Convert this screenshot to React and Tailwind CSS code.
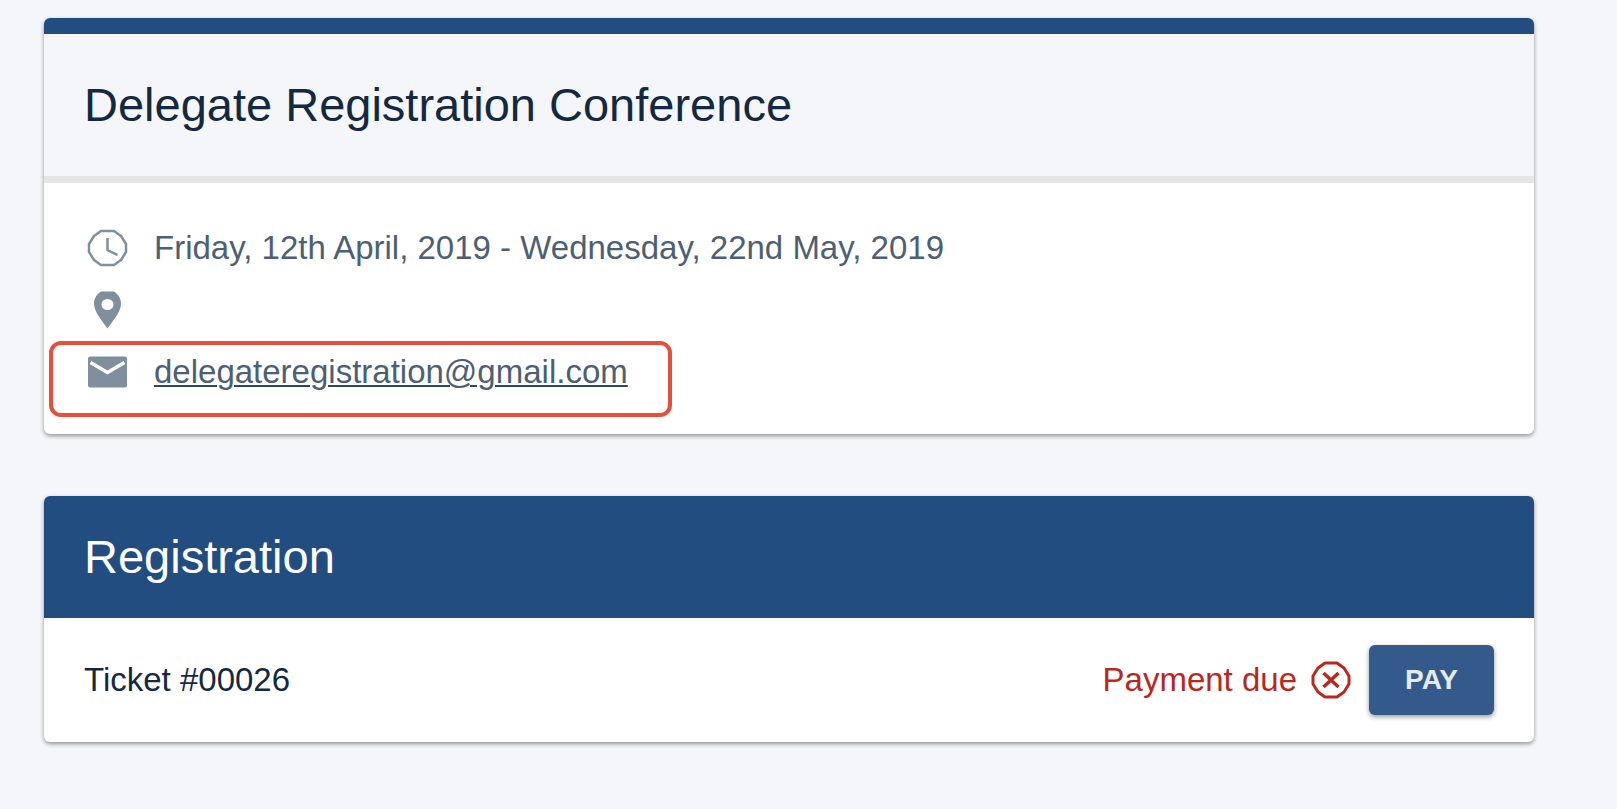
import React from "react";

const ClockIcon = () => (
  <svg width="48" height="48" viewBox="0 0 48 48" fill="none" stroke="#808f9d" aria-hidden="true">
    <path d="M17 7h13l7 5 5 8v8l-5 8-7 5H17l-7-5-5-8v-8l5-8z" strokeWidth="2.5" strokeLinejoin="round" />
    <path d="M23.500 14v12l10 5" strokeWidth="2.5" />
  </svg>
);

const PinIcon = () => (
  <svg width="48" height="48" viewBox="0 0 48 48" fill="#808f9d" aria-hidden="true">
    <path
      fillRule="evenodd"
      d="M17 5.500h13c4 2.500 7 7 7 12 0 8.500-8 17-13.500 25C18 34.500 10 26 10 17.500c0-5 3-9.500 7-12zM23.500 24a6 5.500 0 1 0 0-11 6 5.500 0 0 0 0 11z"
    />
  </svg>
);

const MailIcon = () => (
  <svg width="48" height="48" viewBox="0 0 48 48" aria-hidden="true">
    <rect x="4" y="8.500" width="39" height="31" rx="2" fill="#808f9d" />
    <path d="M6.500 14.500L23.500 24.500l17-10" fill="none" stroke="#ffffff" strokeWidth="3.500" />
  </svg>
);

const CrossIcon = () => (
  <svg width="40" height="40" viewBox="0 0 40 40" fill="none" stroke="#b8281c" aria-hidden="true">
    <path d="M14 3h12l7 5 5 8v8l-5 8-7 5H14l-7-5-5-8v-8l5-8z" strokeWidth="3" strokeLinejoin="round" />
    <path d="M12.500 13l15 14M27.500 13l-15 14" strokeWidth="3.500" />
  </svg>
);

const App = () => {
  const event = {
    nama: "Delegate Registration Conference",
    date: "Friday, 12th April, 2019 - Wednesday, 22nd May, 2019",
    email: "delegateregistration@gmail.com",
  };

  const ticket = { number: "00026", status: "Payment due" };

  return (
    <main className="min-h-screen bg-[#f4f6fa] pt-[18px] pb-16 pl-11 pr-[83px] font-['Liberation_Sans',Arial,sans-serif] text-[33px] leading-[62px] text-[#14293f]">
      {/* Event details */}
      <section className="mb-[62px] overflow-hidden rounded-md bg-white shadow-[0_2px_4px_rgba(0,0,0,0.4)]">
        <header className="border-t-16 border-b-7 border-t-[#214d80] border-b-[#e5e5e5] bg-[#f4f6fa] px-10 py-10">
          <h1 className="text-[47px]">{event.nama}</h1>
        </header>

        <ul className="px-10 pt-[34px] pb-[31px] text-[#4d6073]">
          <li className="flex h-[62px] items-center gap-[22px]">
            <ClockIcon />
            <span>{event.date}</span>
          </li>
          <li className="flex h-[62px] items-center gap-[22px]">
            <PinIcon />
          </li>
          <li className="relative flex h-[62px] w-fit items-center gap-[22px]">
            <MailIcon />
            <a
              href={`mailto:${event.email}`}
              className="underline decoration-[#2b4562] decoration-2 underline-offset-2"
            >
              {event.email}
            </a>
            {/* Highlight around the contact row */}
            <div className="pointer-events-none absolute top-0 -right-11 -bottom-3.5 -left-[35px] rounded-xl border-4 border-[#e54f3b]" />
          </li>
        </ul>
      </section>

      {/* Registration */}
      <section className="overflow-hidden rounded-md bg-white shadow-[0_2px_4px_rgba(0,0,0,0.4)]">
        <header className="bg-[#214d80] px-10 py-[30px]">
          <h2 className="text-[47px] text-white">Registration</h2>
        </header>

        <div className="flex items-center justify-between px-10 py-[27px]">
          <p>Ticket #{ticket.number}</p>
          <div className="flex items-center gap-[18px]">
            <p className="flex items-center gap-3.5 text-[#b8281c]">
              {ticket.status}
              <CrossIcon />
            </p>
            <button
              type="button"
              className="h-[70px] w-[125px] rounded-md bg-[#345a8b] text-[28px] font-bold text-[#e6ebf2] shadow-[0_2px_5px_rgba(0,0,0,0.4)]"
            >
              PAY
            </button>
          </div>
        </div>
      </section>
    </main>
  );
};

export default App;
